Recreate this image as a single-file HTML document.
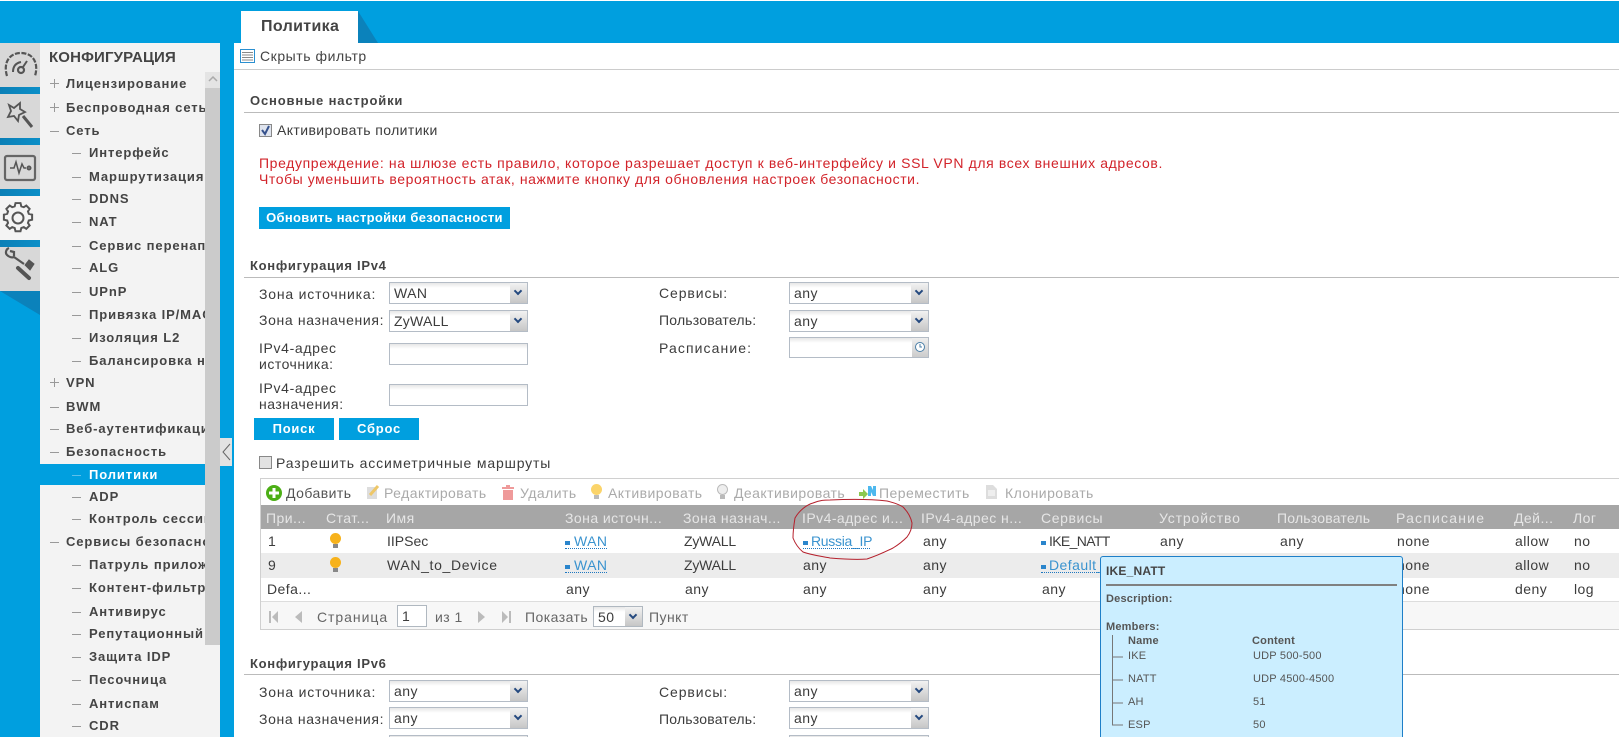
<!DOCTYPE html>
<html lang="ru"><head><meta charset="utf-8"><title>Политика</title>
<style>
html,body{margin:0;padding:0;width:1619px;height:737px;overflow:hidden;background:#009fdf}
body{position:relative;font-family:"Liberation Sans",sans-serif;font-size:14px;color:#3c3c3c;letter-spacing:.45px}
.a{position:absolute}
.t{position:absolute;line-height:20px;white-space:nowrap}
.tile{position:absolute;left:0;width:40px;height:44px;background:#d8d8d8}
.band{position:absolute;left:0;width:40px;height:7px;background:linear-gradient(100deg,#0b7fb6,#0b8fc8)}
#side{position:absolute;left:40px;top:43px;width:180px;height:694px;background:#f3f3f3;overflow:hidden}
#side .clip{position:absolute;left:0;top:0;width:165px;height:694px;overflow:hidden}
#side .r{position:absolute;left:26px;line-height:20px;white-space:nowrap;font-weight:bold;font-size:13px;letter-spacing:.9px;color:#444}
#side .s{left:49px}
#side .d{position:absolute;width:9px;height:1px;background:#999;left:10px}
#side .ds{left:32px}
#side .p{position:absolute;left:10px;width:9px;height:9px;background:linear-gradient(#999,#999) center/9px 1px no-repeat,linear-gradient(#999,#999) center/1px 9px no-repeat}
.b{font-weight:bold;color:#444}
.line{position:absolute;left:244px;right:0;height:1px;background:#bbb}
.sel,.inp{position:absolute;box-sizing:border-box;background:linear-gradient(#e6e6e6,#fff 5px);border:1px solid #b4bcc6;line-height:20px;padding-left:4px;color:#3c3c3c}
.sel i{position:absolute;right:0;top:0;bottom:0;width:17px;background:linear-gradient(#f2f2f2,#c6c6c6)}
.sel i:after{content:"";position:absolute;left:5px;top:5px;width:4px;height:4px;border:solid #24497f;border-width:0 2px 2px 0;transform:rotate(45deg)}
.btn{position:absolute;background:#009fdf;color:#fff;font-weight:bold;font-size:13px;text-align:center;line-height:22px;height:22px;letter-spacing:.75px}
.gr{color:#aaa}
.hd{color:#e6e6e6}
.lnk{color:#3a93cf}
.ul{position:absolute;height:0;border-bottom:1px dotted #1f78c0}
.ic{position:absolute;width:5px;height:4px;background:#2a85cc;border:0}
.tip{font-size:12px;letter-spacing:.2px;color:#555}
</style></head><body>

<div class="a" style="left:0;top:0;width:1619px;height:1px;background:#fff"></div>

<!-- icon column -->
<div class="tile" style="top:43px"></div><div class="band" style="top:87px"></div>
<div class="tile" style="top:94px"></div><div class="band" style="top:138px"></div>
<div class="tile" style="top:145px"></div><div class="band" style="top:189px"></div>
<div class="tile" style="top:196px;background:#f4f4f4"></div><div class="band" style="top:240px"></div>
<div class="tile" style="top:247px"></div>
<svg class="a" style="left:0;top:291px" width="40" height="24"><path d="M0 0H40V24Z" fill="#0b82bb"/></svg>
<svg class="a" style="left:0;top:43px" width="40" height="250" fill="none" stroke="#555" stroke-width="2">
<path d="M7 33C3 20 9 10 21 10S39 20 35 33" stroke-width="2.200" stroke-dasharray="5 1.500"/><circle cx="21" cy="27" r="3" stroke-width="2.200"/><path d="M23 24l4-6" stroke-width="2"/><path d="M13 29c0-6 3-9 8-10" stroke-width="2"/>
<path d="M9 62l5 3 6-5 0 6 5 3-6 3-1 6-4-5-6 1 3-6z" stroke-width="1.800"/><path d="M23 73l9 11" stroke-width="3"/>
<rect x="5" y="113" width="30" height="24" rx="2" stroke-width="2.200" stroke="#666"/><path d="M10 125h4l2-6 3 11 3-9 2 4h2" stroke-width="1.500"/><circle cx="29" cy="125" r="1.500"/>
<path d="M17 161h6l1 4 3 1 3-2 4 4-2 3 1 3 4 1v6l-4 1-1 3 2 3-4 4-3-2-3 1-1 4h-6l-1-4-3-1-3 2-4-4 2-3-1-3-4-1v-6l4-1 1-3-2-3 4-4 3 2 3-1z" stroke-width="2.400" transform="translate(18 175) scale(.83) translate(-20 -179)"/><circle cx="18" cy="175" r="5.500" stroke-width="2"/>
<path d="M9 205c-3 1-4 5-2 7s5 3 7 2l10 7M10 208l4 1 0 4" stroke-width="2.200"/><path d="M25 222l4-5 5 4-4 6z" fill="#555" stroke-width="1"/><path d="M18 225l11 10" stroke-width="4" stroke-linecap="round"/>
</svg>

<!-- sidebar -->
<div id="side">
<div class="t b" style="left:9px;top:5px;font-size:15px;font-weight:bold;letter-spacing:.15px;color:#444">КОНФИГУРАЦИЯ</div>
<div class="a" style="left:0;top:421px;width:165px;height:21px;background:#009fdf"></div>
<div class="clip">
<div class="p" style="top:36px"></div><div class="r" style="top:31px">Лицензирование</div>
<div class="p" style="top:60px"></div><div class="r" style="top:55px">Беспроводная сеть</div>
<div class="d" style="top:88px"></div><div class="r" style="top:78px">Сеть</div>
<div class="d ds" style="top:110px"></div><div class="r s" style="top:100px">Интерфейс</div>
<div class="d ds" style="top:134px"></div><div class="r s" style="top:124px">Маршрутизация</div>
<div class="d ds" style="top:156px"></div><div class="r s" style="top:146px">DDNS</div>
<div class="d ds" style="top:179px"></div><div class="r s" style="top:169px">NAT</div>
<div class="d ds" style="top:203px"></div><div class="r s" style="top:193px">Сервис перенаправления</div>
<div class="d ds" style="top:225px"></div><div class="r s" style="top:215px">ALG</div>
<div class="d ds" style="top:249px"></div><div class="r s" style="top:239px">UPnP</div>
<div class="d ds" style="top:272px"></div><div class="r s" style="top:262px">Привязка IP/MAC</div>
<div class="d ds" style="top:295px"></div><div class="r s" style="top:285px">Изоляция L2</div>
<div class="d ds" style="top:318px"></div><div class="r s" style="top:308px">Балансировка нагрузки</div>
<div class="p" style="top:335px"></div><div class="r" style="top:330px">VPN</div>
<div class="d" style="top:364px"></div><div class="r" style="top:354px">BWM</div>
<div class="d" style="top:386px"></div><div class="r" style="top:376px">Веб-аутентификация</div>
<div class="d" style="top:409px"></div><div class="r" style="top:399px">Безопасность</div>
<div class="d ds" style="top:432px;background:#5fc0ea"></div><div class="r s" style="top:422px;color:#fff">Политики</div>
<div class="d ds" style="top:454px"></div><div class="r s" style="top:444px">ADP</div>
<div class="d ds" style="top:476px"></div><div class="r s" style="top:466px">Контроль сессий</div>
<div class="d" style="top:499px"></div><div class="r" style="top:489px">Сервисы безопасности</div>
<div class="d ds" style="top:522px"></div><div class="r s" style="top:512px">Патруль приложений</div>
<div class="d ds" style="top:545px"></div><div class="r s" style="top:535px">Контент-фильтр</div>
<div class="d ds" style="top:569px"></div><div class="r s" style="top:559px">Антивирус</div>
<div class="d ds" style="top:591px"></div><div class="r s" style="top:581px">Репутационный фильтр</div>
<div class="d ds" style="top:614px"></div><div class="r s" style="top:604px">Защита IDP</div>
<div class="d ds" style="top:637px"></div><div class="r s" style="top:627px">Песочница</div>
<div class="d ds" style="top:661px"></div><div class="r s" style="top:651px">Антиспам</div>
<div class="d ds" style="top:683px"></div><div class="r s" style="top:673px">CDR</div>
</div>
<div class="a" style="left:165px;top:29px;width:15px;height:16px;background:#e4e4e4"></div>
<svg class="a" style="left:168px;top:33px" width="10" height="7"><path d="M1 5l4-4 4 4" fill="none" stroke="#aaa" stroke-width="1.500"/></svg>
<div class="a" style="left:165px;top:45px;width:15px;height:557px;background:#cbcbcb"></div>
</div>
<div class="a" style="left:220px;top:438px;width:12px;height:28px;background:#e2e2e2"></div>
<svg class="a" style="left:220px;top:438px" width="12" height="28"><path d="M10 6L3 14l7 8" fill="none" stroke="#666" stroke-width="1"/></svg>

<!-- content -->
<div class="a" style="left:234px;top:43px;right:0;bottom:0;background:#fff"></div>
<div class="a" style="left:241px;top:11px;width:117px;height:32px;background:#fff"></div>
<svg class="a" style="left:358px;top:11px" width="20" height="32"><path d="M0 0L20 32H0Z" fill="#0b82bb"/></svg>
<div class="t" style="left:261px;top:17px;font-size:16px;font-weight:bold;letter-spacing:.35px;color:#444">Политика</div>
<svg class="a" style="left:240px;top:49px" width="15" height="14"><rect x=".5" y=".5" width="14" height="13" fill="#fff" stroke="#2a8fd0"/><path d="M2 3.500h11M2 6h11M2 8.500h11M2 11h11" stroke="#888"/></svg>
<div class="t" style="left:260px;top:46px;letter-spacing:.55px;color:#444">Скрыть фильтр</div>
<div class="a" style="left:234px;right:0;top:69px;height:1px;background:#ccc"></div>

<div class="t b" style="left:250px;top:91px;font-size:13px;font-weight:bold;letter-spacing:.85px">Основные настройки</div>
<div class="line" style="top:112px"></div>
<svg class="a" style="left:259px;top:124px" width="13" height="13"><rect x=".5" y=".5" width="12" height="12" fill="#dfe4ee" stroke="#888"/><path d="M3 6l3 4 4-8" fill="none" stroke="#35518c" stroke-width="2"/></svg>
<div class="t" style="left:277px;top:120px;letter-spacing:.4px">Активировать политики</div>
<div class="t" style="left:259px;top:153px;color:#d2232a;letter-spacing:.62px">Предупреждение: на шлюзе есть правило, которое разрешает доступ к веб-интерфейсу и SSL VPN для всех внешних адресов.</div>
<div class="t" style="left:259px;top:169px;color:#d2232a;letter-spacing:.57px">Чтобы уменьшить вероятность атак, нажмите кнопку для обновления настроек безопасности.</div>
<div class="btn" style="left:259px;top:207px;width:251px;letter-spacing:.3px">Обновить настройки безопасности</div>

<div class="t b" style="left:250px;top:256px;font-size:13px;font-weight:bold;letter-spacing:.7px">Конфигурация IPv4</div>
<div class="line" style="top:277px"></div>
<div class="t" style="left:259px;top:284px;letter-spacing:.8px">Зона источника:</div>
<div class="sel" style="left:389px;top:282px;width:139px;height:22px">WAN<i></i></div>
<div class="t" style="left:259px;top:310px;letter-spacing:.65px">Зона назначения:</div>
<div class="sel" style="left:389px;top:310px;width:139px;height:22px;letter-spacing:.25px">ZyWALL<i></i></div>
<div class="t" style="left:259px;top:338px;letter-spacing:.65px">IPv4-адрес</div>
<div class="t" style="left:259px;top:354px;letter-spacing:.5px">источника:</div>
<div class="inp" style="left:389px;top:343px;width:139px;height:22px"></div>
<div class="t" style="left:259px;top:378px;letter-spacing:.65px">IPv4-адрес</div>
<div class="t" style="left:259px;top:394px;letter-spacing:.5px">назначения:</div>
<div class="inp" style="left:389px;top:384px;width:139px;height:22px"></div>
<div class="btn" style="left:254px;top:418px;width:80px">Поиск</div>
<div class="btn" style="left:339px;top:418px;width:80px">Сброс</div>
<div class="t" style="left:659px;top:283px;letter-spacing:.9px">Сервисы:</div>
<div class="sel" style="left:789px;top:282px;width:140px;height:22px">any<i></i></div>
<div class="t" style="left:659px;top:310px;letter-spacing:.2px">Пользователь:</div>
<div class="sel" style="left:789px;top:310px;width:140px;height:22px">any<i></i></div>
<div class="t" style="left:659px;top:338px;letter-spacing:1.1px">Расписание:</div>
<div class="inp" style="left:789px;top:337px;width:140px;height:21px"></div>
<div class="a" style="left:912px;top:338px;width:16px;height:19px;background:linear-gradient(#eee,#ccc)"></div>
<svg class="a" style="left:914px;top:341px" width="12" height="12"><circle cx="6" cy="6" r="4.500" fill="#fff" stroke="#4a7fa8"/><path d="M6 3v3h2" fill="none" stroke="#4a7fa8"/></svg>

<svg class="a" style="left:259px;top:456px" width="13" height="13"><rect x=".5" y=".5" width="12" height="12" fill="#e2e2e2" stroke="#888"/></svg>
<div class="t" style="left:276px;top:453px;letter-spacing:.85px">Разрешить ассиметричные маршруты</div>

<!-- grid -->
<div class="a" style="left:260px;top:478px;right:0;height:152px;box-sizing:border-box;border:1px solid #d0d0d0;border-right:0;background:#f7f7f7"></div>
<div class="a" style="left:261px;top:479px;right:0;height:26px;background:#fff"></div>
<div class="a" style="left:261px;top:505px;right:0;height:24px;background:#a6a6a6"></div>
<div class="a" style="left:261px;top:529px;right:0;height:24px;background:#fff"></div>
<div class="a" style="left:261px;top:553px;right:0;height:25px;background:#ececec"></div>
<div class="a" style="left:261px;top:578px;right:0;height:23px;background:#fff"></div>
<div class="a" style="left:261px;top:601px;right:0;height:1px;background:#ddd"></div>

<svg class="a" style="left:266px;top:485px" width="16" height="16"><circle cx="8" cy="8" r="8" fill="#4caf16"/><path d="M8 3v10M3 8h10" stroke="#fff" stroke-width="3"/></svg>
<div class="t" style="left:286px;top:483px;color:#555">Добавить</div>
<svg class="a" style="left:366px;top:484px" width="14" height="16"><rect x="1" y="3" width="10" height="12" fill="#ddd"/><path d="M4 11L12 2" stroke="#eec768" stroke-width="3"/></svg>
<div class="t gr" style="left:384px;top:483px">Редактировать</div>
<svg class="a" style="left:502px;top:484px" width="12" height="16"><path d="M0 3h12v2H0zM1 6h10v10H1z" fill="#ef9a9a"/><rect x="4" y="1" width="4" height="2" fill="#ef9a9a"/></svg>
<div class="t gr" style="left:520px;top:483px">Удалить</div>
<svg class="a" style="left:591px;top:484px" width="11" height="16"><circle cx="5.500" cy="5.500" r="5.500" fill="#fbd46a"/><rect x="3" y="11" width="5" height="4" fill="#bbb"/></svg>
<div class="t gr" style="left:608px;top:483px">Активировать</div>
<svg class="a" style="left:717px;top:484px" width="11" height="16"><circle cx="5.500" cy="5.500" r="5" fill="#eee" stroke="#bbb"/><rect x="3" y="11" width="5" height="4" fill="#bbb"/></svg>
<div class="t gr" style="left:734px;top:483px">Деактивировать</div>
<svg class="a" style="left:859px;top:486px" width="17" height="13"><path d="M0 6h4V3l5 5-5 5v-3H0z" fill="#8cc850"/><path d="M9 0h3l2 4V0h3v10h-3l-2-4v4H9z" fill="#4db8ee"/></svg>
<div class="t gr" style="left:879px;top:483px">Переместить</div>
<svg class="a" style="left:986px;top:485px" width="11" height="14"><path d="M0 0h7l4 4v10H0z" fill="#ddd"/><path d="M2 6h7M2 8h7M2 10h7" stroke="#fff"/></svg>
<div class="t gr" style="left:1005px;top:483px">Клонировать</div>

<div class="t hd" style="left:266px;top:508px">При...</div>
<div class="t hd" style="left:326px;top:508px">Стат...</div>
<div class="t hd" style="left:386px;top:508px">Имя</div>
<div class="t hd" style="left:565px;top:508px">Зона источн...</div>
<div class="t hd" style="left:683px;top:508px">Зона назнач...</div>
<div class="t hd" style="left:802px;top:508px">IPv4-адрес и...</div>
<div class="t hd" style="left:921px;top:508px">IPv4-адрес н...</div>
<div class="t hd" style="left:1041px;top:508px;letter-spacing:.6px">Сервисы</div>
<div class="t hd" style="left:1159px;top:508px;letter-spacing:.85px">Устройство</div>
<div class="t hd" style="left:1277px;top:508px;letter-spacing:.2px">Пользователь</div>
<div class="t hd" style="left:1396px;top:508px;letter-spacing:1.2px">Расписание</div>
<div class="t hd" style="left:1514px;top:508px">Дей...</div>
<div class="t hd" style="left:1573px;top:508px">Лог</div>

<!-- row 1 -->
<div class="t" style="left:268px;top:531px">1</div>
<svg class="a" style="left:330px;top:533px" width="11" height="16"><circle cx="5.500" cy="5.500" r="5.500" fill="#f7b21b"/><rect x="3" y="11" width="5" height="4" fill="#888"/></svg>
<div class="t" style="left:387px;top:531px;letter-spacing:0">IIPSec</div>
<div class="ic" style="left:565px;top:541px"></div><div class="t lnk" style="left:574px;top:531px">WAN</div><div class="ul" style="left:565px;top:548px;width:42px"></div>
<div class="t" style="left:684px;top:531px;letter-spacing:-.2px">ZyWALL</div>
<div class="ic" style="left:803px;top:541px"></div><div class="t lnk" style="left:811px;top:531px;letter-spacing:-.3px">Russia_IP</div><div class="ul" style="left:803px;top:548px;width:67px"></div>
<div class="t" style="left:923px;top:531px">any</div>
<div class="ic" style="left:1041px;top:541px"></div><div class="t" style="left:1049px;top:531px;letter-spacing:-.65px">IKE_NATT</div>
<div class="t" style="left:1160px;top:531px">any</div>
<div class="t" style="left:1280px;top:531px">any</div>
<div class="t" style="left:1397px;top:531px">none</div>
<div class="t" style="left:1515px;top:531px">allow</div>
<div class="t" style="left:1574px;top:531px">no</div>
<!-- row 2 -->
<div class="t" style="left:268px;top:555px">9</div>
<svg class="a" style="left:330px;top:557px" width="11" height="16"><circle cx="5.500" cy="5.500" r="5.500" fill="#f7b21b"/><rect x="3" y="11" width="5" height="4" fill="#888"/></svg>
<div class="t" style="left:387px;top:555px;letter-spacing:.65px">WAN_to_Device</div>
<div class="ic" style="left:565px;top:565px"></div><div class="t lnk" style="left:574px;top:555px">WAN</div><div class="ul" style="left:565px;top:572px;width:42px"></div>
<div class="t" style="left:684px;top:555px;letter-spacing:-.2px">ZyWALL</div>
<div class="t" style="left:803px;top:555px">any</div>
<div class="t" style="left:923px;top:555px">any</div>
<div class="ic" style="left:1041px;top:565px"></div><div class="t lnk" style="left:1049px;top:555px">Default_VPN</div><div class="ul" style="left:1041px;top:572px;width:60px"></div>
<div class="t" style="left:1397px;top:555px">none</div>
<div class="t" style="left:1515px;top:555px">allow</div>
<div class="t" style="left:1574px;top:555px">no</div>
<!-- row 3 -->
<div class="t" style="left:267px;top:579px">Defa...</div>
<div class="t" style="left:566px;top:579px">any</div>
<div class="t" style="left:685px;top:579px">any</div>
<div class="t" style="left:803px;top:579px">any</div>
<div class="t" style="left:923px;top:579px">any</div>
<div class="t" style="left:1042px;top:579px">any</div>
<div class="t" style="left:1160px;top:579px">any</div>
<div class="t" style="left:1280px;top:579px">any</div>
<div class="t" style="left:1397px;top:579px">none</div>
<div class="t" style="left:1515px;top:579px">deny</div>
<div class="t" style="left:1574px;top:579px">log</div>

<!-- pager -->
<svg class="a" style="left:268px;top:610px" width="245" height="14" fill="#bbb"><path d="M1 1h2v12H1zM10 1v12L4 7zM34 1v12l-7-6z"/><path d="M210 1v12l7-6zM234 1v12l6-6zM241 1h2v12h-2z"/></svg>
<div class="t" style="left:317px;top:607px;color:#666;letter-spacing:.95px">Страница</div>
<div class="inp" style="left:397px;top:605px;width:30px;height:22px;background:#fff;border-color:#b0b8c0">1</div>
<div class="t" style="left:435px;top:607px;color:#666">из 1</div>
<div class="t" style="left:525px;top:607px;color:#666">Показать</div>
<div class="sel" style="left:593px;top:606px;width:50px;height:21px;border-color:#b0b8c0">50<i></i></div>
<div class="t" style="left:649px;top:607px;color:#666">Пункт</div>

<!-- IPv6 -->
<div class="t b" style="left:250px;top:654px;font-size:13px;font-weight:bold;letter-spacing:.7px">Конфигурация IPv6</div>
<div class="line" style="top:674px"></div>
<div class="t" style="left:259px;top:682px;letter-spacing:.8px">Зона источника:</div>
<div class="sel" style="left:389px;top:680px;width:139px;height:22px">any<i></i></div>
<div class="t" style="left:259px;top:709px;letter-spacing:.65px">Зона назначения:</div>
<div class="sel" style="left:389px;top:707px;width:139px;height:22px">any<i></i></div>
<div class="inp" style="left:389px;top:735px;width:139px;height:22px"></div>
<div class="t" style="left:659px;top:682px;letter-spacing:.9px">Сервисы:</div>
<div class="sel" style="left:789px;top:680px;width:140px;height:22px">any<i></i></div>
<div class="t" style="left:659px;top:709px;letter-spacing:.2px">Пользователь:</div>
<div class="sel" style="left:789px;top:707px;width:140px;height:22px">any<i></i></div>
<div class="inp" style="left:789px;top:735px;width:140px;height:22px"></div>

<!-- tooltip -->
<div class="a" style="left:1100px;top:556px;width:303px;height:184px;box-sizing:border-box;background:#cbeeff;border:1px solid #1e7fc8;border-radius:3px"></div>
<div class="t tip" style="left:1106px;top:561px;font-weight:bold;font-size:12px;color:#444">IKE_NATT</div>
<div class="a" style="left:1106px;top:584px;width:291px;height:2px;background:#808080"></div>
<div class="t tip" style="left:1106px;top:589px;font-weight:bold;font-size:11px">Description:</div>
<div class="t tip" style="left:1106px;top:617px;font-weight:bold;font-size:11px">Members:</div>
<div class="t tip" style="left:1128px;top:631px;font-weight:bold;font-size:11px">Name</div>
<div class="t tip" style="left:1252px;top:631px;font-weight:bold;font-size:11px">Content</div>
<svg class="a" style="left:1112px;top:635px" width="12" height="92"><path d="M.5 0V90H11M0 22H11M0 45H11M0 68H11" fill="none" stroke="#777"/></svg>
<div class="t tip" style="left:1128px;top:646px;font-size:11px">IKE</div><div class="t tip" style="left:1253px;top:646px;font-size:11px">UDP 500-500</div>
<div class="t tip" style="left:1128px;top:669px;font-size:11px">NATT</div><div class="t tip" style="left:1253px;top:669px;font-size:11px">UDP 4500-4500</div>
<div class="t tip" style="left:1128px;top:692px;font-size:11px">AH</div><div class="t tip" style="left:1253px;top:692px;font-size:11px">51</div>
<div class="t tip" style="left:1128px;top:715px;font-size:11px">ESP</div><div class="t tip" style="left:1253px;top:715px;font-size:11px">50</div>

<!-- annotation -->
<svg class="a" style="left:0;top:0" width="1619" height="737"><path d="M795 518C799 511 806 505 813 503C820 500 825 500 830 500C850 499 870 499 887 501C895 503 900 505 903 507C908 512 911 518 912 523C912 529 910 533 907 537C903 541 898 545 893 548C885 552 876 556 867 559C855 560 842 559 830 558C820 556 811 555 803 552C798 548 795 543 793 538C793 531 794 524 795 518Z" fill="none" stroke="#b5202c" stroke-width="1"/></svg>
</body></html>
